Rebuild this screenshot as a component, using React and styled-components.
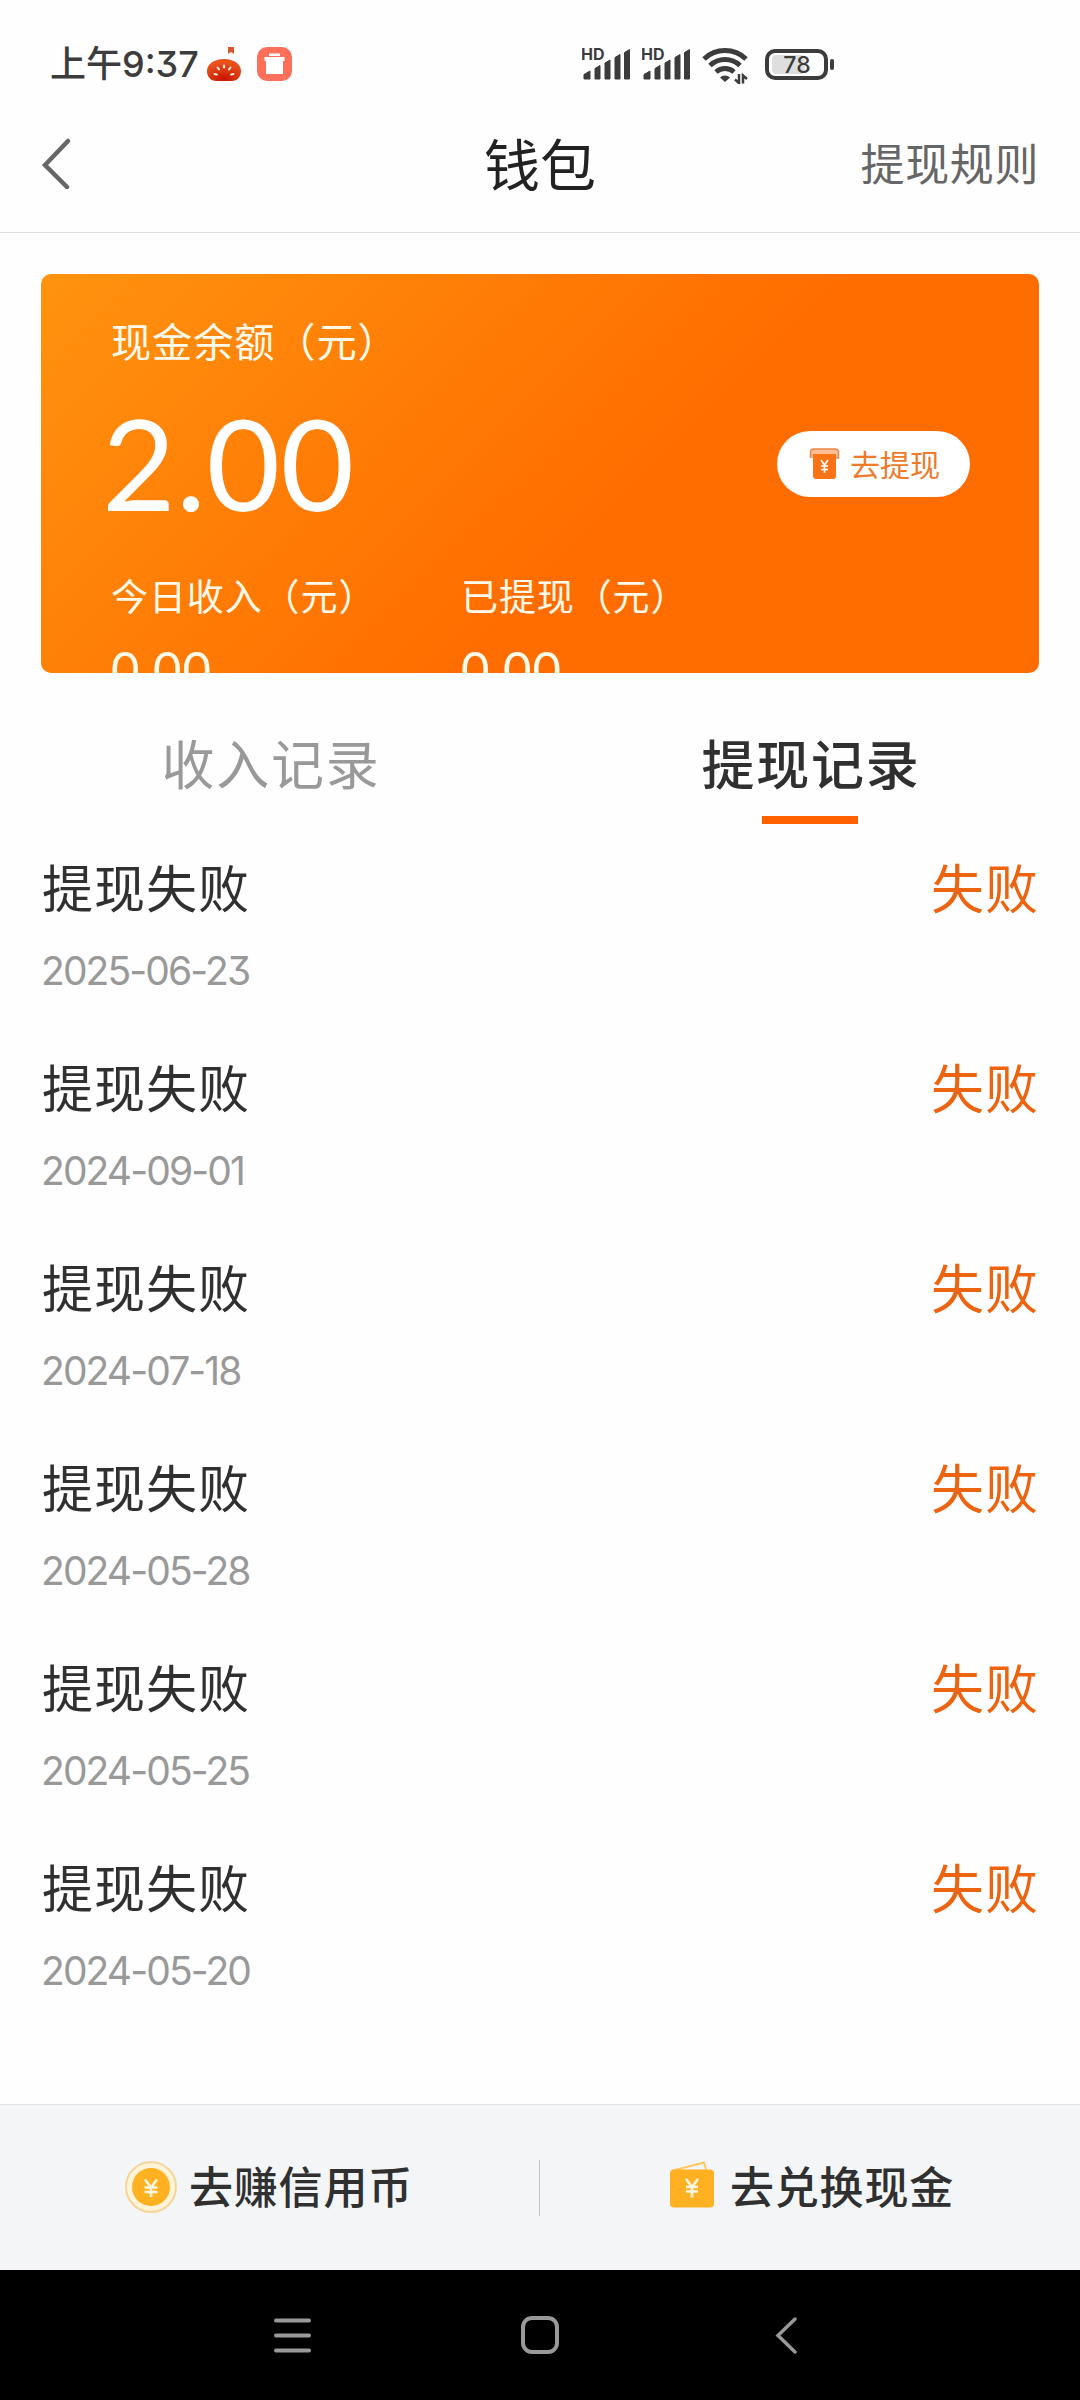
import styled, { createGlobalStyle } from 'styled-components'

const cjk = `'Noto Sans CJK SC', sans-serif`

const GlobalStyle = createGlobalStyle`
  * {
    box-sizing: border-box;
  }

  body {
    margin: 0;
    background: #fefefe;
    font-family: ${cjk};
  }
`

const Screen = styled.div`
  width: 1080px;
  height: 2400px;
  display: flex;
  flex-direction: column;
  background: #fefefe;
  overflow: hidden;
  white-space: nowrap;
`

const StatusBar = styled.div`
  height: 104px;
  padding: 24px 245px 0 50px;
  display: flex;
  align-items: center;
  color: #3c3c3c;
`

const Time = styled.span`
  width: 156px;
  font-family: Inter, ${cjk};
  font-feature-settings: 'cv09';
  font-size: 36px;
  font-weight: 500;
  line-height: 50px;
`

const Notifications = styled.div`
  display: flex;
  gap: 15px;
`

const Indicators = styled.div`
  display: flex;
  align-items: center;
  margin-left: auto;
`

const Hd = styled.text`
  font-family: Inter, sans-serif;
  font-size: 16px;
  font-weight: 700;
`

const BatteryLevel = styled.text`
  font-family: Inter, sans-serif;
  font-size: 23px;
  font-weight: 500;
`

const NavBar = styled.header`
  height: 129px;
  padding: 0 42px 13px;
  display: grid;
  grid-template-columns: 1fr auto 1fr;
  align-items: center;
  border-bottom: 1px solid #dedede;
`

const PageTitle = styled.h1`
  margin: 0;
  font-size: 56px;
  font-weight: 400;
  line-height: 70px;
  color: #222;
`

const RulesLink = styled.a`
  justify-self: end;
  font-size: 44px;
  line-height: 60px;
  letter-spacing: 0.6px;
  margin-right: -1px;
  color: #666;
`

const Card = styled.section`
  height: 399px;
  margin: 41px 41px 0;
  padding: 39px 69px 0 70px;
  border-radius: 10px;
  overflow: hidden;
  color: #fff;
  background: linear-gradient(135deg, #ff930f 0%, #ff6d00 58%);
`

const CardLabel = styled.div`
  font-size: ${(props) => props.$size}px;
  line-height: 54px;
  letter-spacing: 0.9px;
  color: #fffaea;
`

const BalanceRow = styled.div`
  height: 132px;
  margin-top: 31px;
  display: flex;
  align-items: center;
  justify-content: space-between;
`

const Balance = styled.span`
  margin-left: -9px;
  padding-bottom: 5px;
  font-family: Lato, sans-serif;
  font-size: 127px;
  line-height: 132px;
  letter-spacing: 0.4px;
`

const WithdrawButton = styled.button`
  width: 193px;
  height: 66px;
  margin: 0;
  padding: 0 0 3px 32px;
  display: flex;
  align-items: center;
  gap: 10px;
  border: 0;
  border-radius: 33px;
  background: #fff;
  color: #ee7a2a;
  font-family: ${cjk};
  font-size: 30px;
`

const Stats = styled.div`
  display: grid;
  grid-template-columns: 350px 1fr;
  margin-top: 38px;
`

const StatValue = styled.div`
  margin-top: 16px;
  font-family: Lato, sans-serif;
  font-size: 49px;
  line-height: 60px;
  letter-spacing: 1px;
  color: #fffaea;
`

const Tabs = styled.nav`
  height: 151px;
  display: grid;
  grid-template-columns: 1fr 1fr;
`

const Tab = styled.div`
  display: flex;
  flex-direction: column;
  align-items: center;
  padding-top: 52px;
  font-size: 53px;
  line-height: 74px;
  letter-spacing: 1.8px;
  text-indent: 2px;
  font-weight: ${(props) => (props.$active ? 500 : 400)};
  color: ${(props) => (props.$active ? '#303030' : '#999')};

  &::after {
    content: '';
    width: 96px;
    height: 8px;
    margin-top: 17px;
    background: ${(props) => (props.$active ? '#ff6100' : 'transparent')};
  }
`

const Records = styled.ul`
  flex: 1;
  margin: 0;
  padding: 0 41px 0 42px;
  list-style: none;
`

const Record = styled.li`
  height: 200px;
  padding-top: 25px;
  display: flex;
  justify-content: space-between;
`

const RecordTitle = styled.div`
  font-size: 51px;
  line-height: 74px;
  letter-spacing: 1px;
  color: #303030;
`

const RecordDate = styled.div`
  margin-top: 20px;
  margin-left: -1px;
  font-family: Inter, sans-serif;
  font-feature-settings: 'cv09';
  font-size: 39px;
  line-height: 56px;
  letter-spacing: -1.9px;
  color: #999;
`

const RecordStatus = styled.div`
  font-size: 53px;
  line-height: 74px;
  letter-spacing: 1px;
  color: #ed6410;
`

const Actions = styled.footer`
  height: 166px;
  display: flex;
  align-items: center;
  border-top: 1px solid #e2e2e2;
  background: #f4f5f7;
`

const Action = styled.a`
  width: 539px;
  display: flex;
  align-items: center;
  padding-left: ${(props) => props.$inset}px;
  padding-bottom: 2px;
  gap: ${(props) => props.$gap}px;
  color: #303030;
`

const ActionLabel = styled.span`
  padding-bottom: 4px;
  font-size: 44px;
  font-weight: 500;
  letter-spacing: 0.8px;
  line-height: 60px;
`

const Divider = styled.div`
  width: 1px;
  height: 56px;
  background: #c6c6c6;
`

const SystemNav = styled.div`
  height: 130px;
  display: flex;
  align-items: center;
  justify-content: center;
  gap: 208px;
  background: #000;
`

const TomatoIcon = () => (
  <svg width="36" height="36" viewBox="0 0 36 36">
    <defs>
      <radialGradient id="tomato" cx="0.5" cy="0.9" r="0.7">
        <stop offset="0" stopColor="#c91400" />
        <stop offset="1" stopColor="#e8501c" />
      </radialGradient>
    </defs>
    <path d="M22 1h6v7l-3-2-3 2z" fill="#d9552f" />
    <path
      d="M18 13C8 13 1 18 1 25c0 6 4 10 9 10h16c5 0 9-4 9-10 0-7-7-12-17-12z"
      fill="url(#tomato)"
    />
    <path
      d="M18 19.500v2M11.500 21.500l1.500 2M24.500 21.500l-1.500 2M8.500 28l2.500.6M27.500 28l-2.500.6"
      stroke="#fff3e0"
      strokeWidth="2"
      strokeLinecap="round"
    />
  </svg>
)

const BinIcon = () => (
  <svg width="35" height="36" viewBox="0 0 35 36">
    <rect y="1" width="35" height="34" rx="10" fill="#fc705a" />
    <path d="M12 7.500h11V10H12zM7.500 11h20v4H26v13H9V15H7.500z" fill="#fff" />
  </svg>
)

const Signal = () => (
  <svg width="60" height="40" viewBox="0 0 60 40" fill="#3c3c3c">
    <Hd x="-1" y="16">
      HD
    </Hd>
    <path
      d="M2 35v-4.500l6-3.500v8zM13 35V24.500l5-3V35zM23 35V19l5-3V35zM33 35V13.500l5-3V35zM42.500 35V8.500l5-3V35z"
      stroke="#3c3c3c"
      strokeLinejoin="round"
    />
  </svg>
)

const WifiIcon = () => (
  <svg width="48" height="40" viewBox="0 0 48 40" fill="none" stroke="#3c3c3c">
    <path d="M2 15a30.500 30.500 0 0 1 42 0" strokeWidth="5" />
    <path d="M8 21.500a22 22 0 0 1 30 0" strokeWidth="5" />
    <path d="M14 28a13.500 13.500 0 0 1 18 0" strokeWidth="5" />
    <path d="M18 33.500a7 7 0 0 1 10 0l-5 4.500z" fill="#3c3c3c" stroke="none" />
    <path d="M37 30v9l-4-3.500M41 39.500v-8l4 3.500" strokeWidth="2.500" />
  </svg>
)

const BatteryIcon = styled((props) => (
  <svg width="70" height="40" viewBox="0 0 70 40" {...props}>
    <rect x="2" y="7" width="59" height="27" rx="8" fill="none" stroke="#3c3c3c" strokeWidth="4" />
    <rect x="7" y="11" width="33" height="19" rx="4" fill="#dedede" />
    <rect x="65" y="15" width="4" height="11" rx="2" fill="#3c3c3c" />
    <BatteryLevel x="32" y="29" textAnchor="middle" fill="#3c3c3c">
      78
    </BatteryLevel>
  </svg>
))`
  margin-left: 15px;
`

const BackIcon = () => (
  <svg width="30" height="54" viewBox="0 0 30 54">
    <path d="M26 6L3 30l22 22" fill="none" stroke="#666" strokeWidth="4.500" strokeLinecap="round" />
  </svg>
)

const WithdrawIcon = () => (
  <svg width="31" height="32" viewBox="0 0 31 32">
    <path d="M1.500 11V5a3 3 0 0 1 3-3h22a3 3 0 0 1 3 3v6h-3" fill="#fdbf93" stroke="#e8864a" strokeWidth="1.500" />
    <path d="M4 7h23v22a3 3 0 0 1-3 3H7a3 3 0 0 1-3-3z" fill="#fb7316" />
    <path
      d="M12 13l3.500 5 3.500-5M15.500 18v8M12 19h7M12 22.500h7"
      fill="none"
      stroke="#fff"
      strokeWidth="1.600"
    />
  </svg>
)

const CoinIcon = () => (
  <svg width="52" height="52" viewBox="0 0 52 52">
    <circle cx="26" cy="26" r="25" fill="#fff3d8" stroke="#f5d59a" strokeWidth="2" />
    <circle cx="26" cy="26" r="19" fill="#ffb121" />
    <path
      d="M20 18.500l6 8 6-8M26 26v10M19.500 26.500h13M19.500 31h13"
      fill="none"
      stroke="#fff6e0"
      strokeWidth="2.600"
    />
  </svg>
)

const WalletIcon = () => (
  <svg width="46" height="52" viewBox="0 0 46 52">
    <path d="M4 9.500L35 1.500l2 7" fill="none" stroke="#ffc662" strokeWidth="2" />
    <rect x="1" y="8.500" width="44" height="38" rx="4" fill="#ffb121" />
    <path
      d="M17 18l6 8 6-8M23 25.500v11M17 26h12M17 30.500h12"
      fill="none"
      stroke="#fff6e0"
      strokeWidth="2.600"
    />
  </svg>
)

const MenuIcon = () => (
  <svg width="40" height="40" viewBox="0 0 40 40">
    <path
      d="M4 5.500h33M4 20.500h33M4 35.500h33"
      stroke="#999"
      strokeWidth="4"
      strokeLinecap="round"
    />
  </svg>
)

const HomeIcon = () => (
  <svg width="40" height="40" viewBox="0 0 40 40">
    <rect x="3" y="3" width="34" height="34" rx="9" fill="none" stroke="#999" strokeWidth="4" />
  </svg>
)

const SystemBackIcon = () => (
  <svg width="40" height="40" viewBox="0 0 40 40">
    <path
      d="M27 4L10 20.500 27 37"
      fill="none"
      stroke="#999"
      strokeWidth="3.500"
      strokeLinecap="round"
    />
  </svg>
)

const dates = [
  '2025-06-23',
  '2024-09-01',
  '2024-07-18',
  '2024-05-28',
  '2024-05-25',
  '2024-05-20',
]

const App = () => (
  <>
    <GlobalStyle />
    <Screen>
      <StatusBar>
        <Time>上午9:37</Time>
        <Notifications>
          <TomatoIcon />
          <BinIcon />
        </Notifications>
        <Indicators>
          <Signal />
          <Signal />
          <WifiIcon />
          <BatteryIcon />
        </Indicators>
      </StatusBar>
      <NavBar>
        <BackIcon />
        <PageTitle>钱包</PageTitle>
        <RulesLink>提现规则</RulesLink>
      </NavBar>
      <Card>
        <CardLabel $size={40.2}>现金余额（元）</CardLabel>
        <BalanceRow>
          <Balance>2.00</Balance>
          <WithdrawButton>
            <WithdrawIcon />
            去提现
          </WithdrawButton>
        </BalanceRow>
        <Stats>
          <div>
            <CardLabel $size={37}>今日收入（元）</CardLabel>
            <StatValue>0.00</StatValue>
          </div>
          <div>
            <CardLabel $size={37}>已提现（元）</CardLabel>
            <StatValue>0.00</StatValue>
          </div>
        </Stats>
      </Card>
      <Tabs>
        <Tab>收入记录</Tab>
        <Tab $active>提现记录</Tab>
      </Tabs>
      <Records>
        {dates.map((date) => (
          <Record key={date}>
            <div>
              <RecordTitle>提现失败</RecordTitle>
              <RecordDate>{date}</RecordDate>
            </div>
            <RecordStatus>失败</RecordStatus>
          </Record>
        ))}
      </Records>
      <Actions>
        <Action $inset={125} $gap={12}>
          <CoinIcon />
          <ActionLabel>去赚信用币</ActionLabel>
        </Action>
        <Divider />
        <Action $inset={129} $gap={15}>
          <WalletIcon />
          <ActionLabel>去兑换现金</ActionLabel>
        </Action>
      </Actions>
      <SystemNav>
        <MenuIcon />
        <HomeIcon />
        <SystemBackIcon />
      </SystemNav>
    </Screen>
  </>
)

export default App
